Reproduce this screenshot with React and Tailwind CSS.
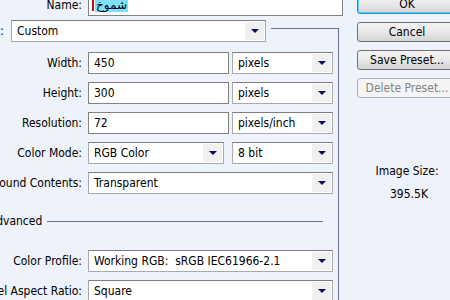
import React from 'react';

const Arrow = () => (
  <div className="w-[19px] self-stretch my-[1px] mr-[1px] bg-[#f0f0f0] flex items-center justify-center">
    <svg width="8" height="4" viewBox="0 0 8 4">
      <polygon points="0,0 8,0 4,4" fill="#0b0b66" />
    </svg>
  </div>
);

const Select = ({ value, w }) => (
  <div className={`${w} h-[22px] flex items-center bg-white border border-[#a9a9a9] border-t-[#7e7e7e]`}>
    <span className="flex-1 pl-[5px] whitespace-pre">{value}</span>
    <Arrow />
  </div>
);

const Field = ({ value, w = 'w-[141px]' }) => (
  <div className={`${w} h-[22px] flex items-center bg-white border border-[#828282]`}>
    <span className="pl-[5px]">{value}</span>
  </div>
);

const Label = ({ children }) => (
  <div className="w-[142px] shrink-0 text-right whitespace-nowrap">{children}</div>
);

const Row = ({ label, children, className = '' }) => (
  <div className={`flex items-center gap-[6px] h-[22px] ${className}`}>
    <Label>{label}</Label>
    {children}
  </div>
);

const Button = ({ children, focused, disabled }) => {
  const base = 'w-[100px] h-[20px] shrink-0 rounded-[3px] flex items-center justify-center';
  if (disabled) {
    return <div className={`${base} border border-[#adb2b5] bg-[#f4f4f4] text-[#838383]`}>{children}</div>;
  }
  return (
    <div
      className={`${base} border bg-linear-to-b from-[#f4f4f4] via-[#e8e8e8] to-[#d4d4d4] ${
        focused ? 'border-[#2a8ccc] shadow-[inset_0_0_0_1px_#52cff6]' : 'border-[#707070]'
      }`}
    >
      {children}
    </div>
  );
};

export default function App() {
  return (
    <div className="w-[450px] h-[300px] overflow-hidden bg-[#eef2fa] text-black text-[12px] leading-[14px] font-['DejaVu_Sans_Condensed','DejaVu_Sans',sans-serif] flex">

      {/* left: fields */}
      <div className="ml-[-60px] mt-[-6px] w-[399px] shrink-0 flex flex-col">
        <Row label="Name:">
          <div className="w-[255px] shrink-0 h-[22px] flex items-center bg-white border border-[#828282]">
            <span className="ml-[3px] w-[2px] h-[12px] bg-[#c01010]" />
            <span className="ml-[1px] px-[1px] bg-[#7fe0fc] font-['DejaVu_Sans',sans-serif]" dir="rtl">شموخ</span>
          </div>
        </Row>

        <div className="mt-[12px] flex-1 border-t border-r border-[#68728c] flex flex-col">
          {/* preset sits over the group line */}
          <div className="-mt-[9px] self-start flex items-center gap-[7px] pr-[5px] bg-[#eef2fa]">
            <div className="w-[64px] text-right">Preset:</div>
            <Select value="Custom" w="w-[255px]" />
          </div>

          <Row label="Width:" className="mt-[10px]">
            <Field value="450" />
            <div className="ml-[-3px]"><Select value="pixels" w="w-[101px]" /></div>
          </Row>
          <Row label="Height:" className="mt-[8px]">
            <Field value="300" />
            <div className="ml-[-3px]"><Select value="pixels" w="w-[101px]" /></div>
          </Row>
          <Row label="Resolution:" className="mt-[8px]">
            <Field value="72" />
            <div className="ml-[-3px]"><Select value="pixels/inch" w="w-[101px]" /></div>
          </Row>
          <Row label="Color Mode:" className="mt-[8px]">
            <Select value="RGB Color" w="w-[136px]" />
            <div className="ml-[2px]"><Select value="8 bit" w="w-[101px]" /></div>
          </Row>
          <Row label="Background Contents:" className="mt-[8px]">
            <Select value="Transparent" w="w-[245px]" />
          </Row>

          <div className="mt-[20px] h-[14px] flex items-center">
            <div className="w-[107px] pl-[49px] shrink-0 whitespace-nowrap">Advanced</div>
            <div className="w-[276px] h-px bg-[#68728c]" />
          </div>

          <Row label="Color Profile:" className="mt-[22px]">
            <Select value="Working RGB:  sRGB IEC61966-2.1" w="w-[245px]" />
          </Row>
          <Row label="Pixel Aspect Ratio:" className="mt-[8px]">
            <Select value="Square" w="w-[245px]" />
          </Row>
        </div>
      </div>

      {/* right: buttons */}
      <div className="ml-[18px] mt-[-6px] flex flex-col items-start">
        <div className="flex flex-col gap-[8px]">
          <Button focused>OK</Button>
          <Button>Cancel</Button>
          <Button>Save Preset...</Button>
          <Button disabled>Delete Preset...</Button>
        </div>
        <div className="mt-[66px] w-[100px] text-center">Image Size:</div>
        <div className="mt-[9px] w-[100px] text-center pl-[4px]">395.5K</div>
      </div>
    </div>
  );
}
